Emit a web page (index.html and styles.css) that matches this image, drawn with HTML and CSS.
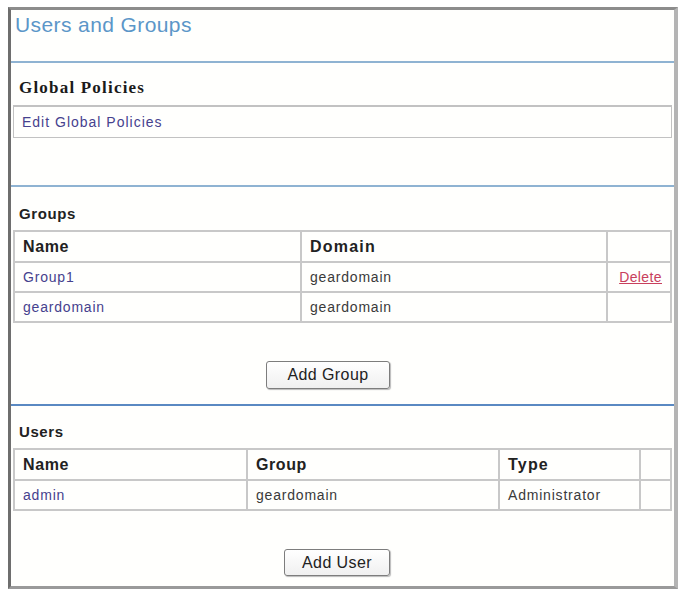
FILE: index.html
```html
<!DOCTYPE html>
<html lang="en">
<head>
    <meta charset="UTF-8">
    <title>Users and Groups</title>
    <link rel="stylesheet" href="styles.css">
</head>
<body>
    <div class="frame">
        <div class="title-bar">
            <h1>Users and Groups</h1>
        </div>

        <section class="policies">
            <h2 class="serif-heading">Global Policies</h2>
            <div class="policy-box">
                <a href="#">Edit Global Policies</a>
            </div>
        </section>

        <section class="groups">
            <h2>Groups</h2>
            <table class="grid">
                <colgroup>
                    <col style="width: 287px;">
                    <col style="width: 306px;">
                    <col>
                </colgroup>
                <tr>
                    <th>Name</th>
                    <th class="wide">Domain</th>
                    <th></th>
                </tr>
                <tr>
                    <td><a href="#">Group1</a></td>
                    <td>geardomain</td>
                    <td class="action"><a href="#" class="delete">Delete</a></td>
                </tr>
                <tr>
                    <td><a href="#">geardomain</a></td>
                    <td>geardomain</td>
                    <td></td>
                </tr>
            </table>
            <div class="button-row">
                <button type="button" class="add-group">Add Group</button>
            </div>
        </section>

        <section class="users">
            <h2>Users</h2>
            <table class="grid">
                <colgroup>
                    <col style="width: 233px;">
                    <col style="width: 252px;">
                    <col style="width: 141px;">
                    <col>
                </colgroup>
                <tr>
                    <th>Name</th>
                    <th>Group</th>
                    <th class="wide">Type</th>
                    <th></th>
                </tr>
                <tr>
                    <td><a href="#">admin</a></td>
                    <td>geardomain</td>
                    <td>Administrator</td>
                    <td></td>
                </tr>
            </table>
            <div class="button-row">
                <button type="button" class="add-user">Add User</button>
            </div>
        </section>
    </div>
</body>
</html>
```

FILE: styles.css
```css
body {
    margin: 0;
    background-color: #fff;
    font-family: "Liberation Sans", Arial, sans-serif;
    color: #3a3a3a;
}

.frame {
    margin: 7px 0 0 8px;
    width: 663px;
    border: 3px solid #9a9a9a;
    border-left-color: #6e6e6e;
    border-top-color: #8c8c8c;
    border-right: 4px solid #b4b4b4;
    background-color: #fffffd;
}

.title-bar {
    height: 47px;
    padding: 4px 0 0 4px;
    border-bottom: 2px solid #8fb3d2;
}

.title-bar h1 {
    margin: 0;
    font-size: 21px;
    line-height: 22px;
    font-weight: normal;
    letter-spacing: 0.4px;
    color: #5b96c8;
}

section {
    padding: 0 2px;
}

h2 {
    margin: 0;
    height: 22px;
    padding-left: 6px;
    font-size: 15px;
    line-height: 22px;
    font-weight: bold;
    letter-spacing: 0.6px;
    color: #222;
}

.serif-heading {
    font-family: "Liberation Serif", "Times New Roman", serif;
    font-size: 17px;
    letter-spacing: 1.2px;
    color: #1a1a1a;
}

.policies {
    padding-top: 14px;
    padding-bottom: 47px;
    border-bottom: 2px solid #8fb3d2;
}

.policy-box {
    margin-top: 6px;
    height: 30px;
    padding-left: 8px;
    border: 1px solid #c2c2c2;
    border-width: 2px 1px 1px 1px;
    line-height: 30px;
    font-size: 14px;
    letter-spacing: 1px;
}

a {
    color: #46428e;
    text-decoration: none;
}

.groups {
    padding-top: 16px;
    padding-bottom: 15px;
    border-bottom: 2px solid #5a89c2;
}

.users {
    padding-top: 15px;
    padding-bottom: 10px;
}

.grid {
    margin-top: 5px;
    width: 659px;
    table-layout: fixed;
    border-collapse: collapse;
    font-size: 14px;
    letter-spacing: 0.8px;
}

.grid th,
.grid td {
    border: 2px solid #c8c8c8;
    padding: 0 0 0 8px;
    text-align: left;
    white-space: nowrap;
}

.grid th {
    height: 29px;
    font-size: 16px;
    letter-spacing: 0.6px;
    color: #222;
}

.grid td {
    height: 28px;
}

.grid th.wide {
    letter-spacing: 1.2px;
}

.grid td.action {
    text-align: right;
    padding: 0 8px 0 0;
    letter-spacing: 0.4px;
}

.delete {
    color: #c8405c;
    text-decoration: underline;
}

.button-row {
    display: flex;
    margin-top: 38px;
}

button {
    font-family: "Liberation Sans", Arial, sans-serif;
    font-size: 16px;
    letter-spacing: 0.4px;
    color: #222;
    background: linear-gradient(#ffffff, #f0f0f0);
    border: 1px solid #7d7d7d;
    border-radius: 3px;
    box-shadow: 1px 1px 1px #bbb;
    padding: 0;
}

.add-group {
    width: 124px;
    height: 28px;
    margin-left: 253px;
}

.add-user {
    width: 106px;
    height: 27px;
    margin-left: 271px;
}
```
